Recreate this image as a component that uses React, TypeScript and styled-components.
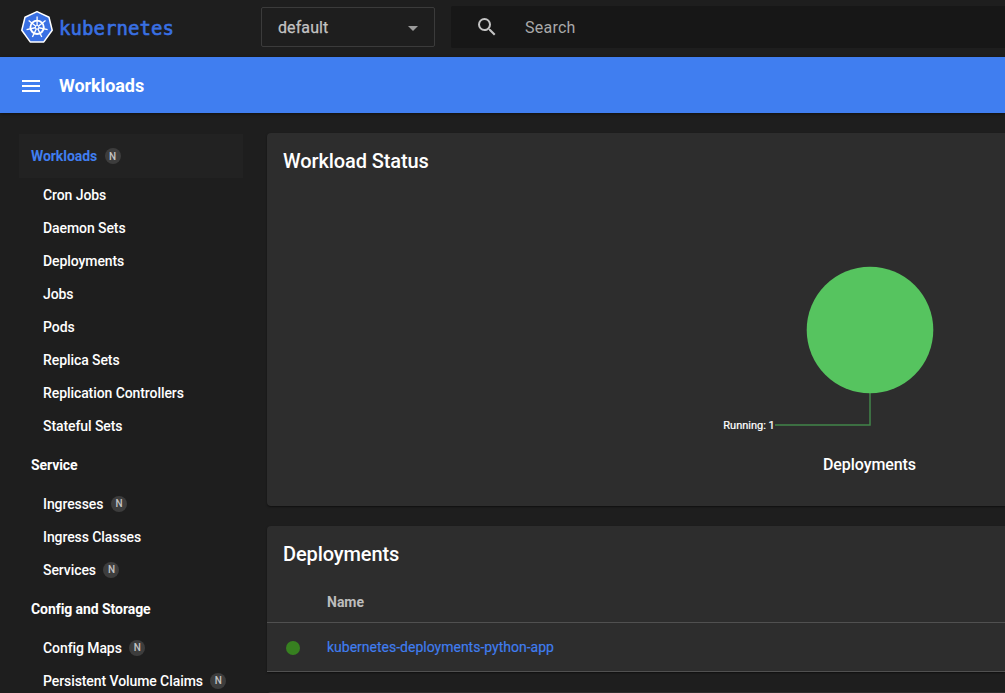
import React from "react";
import styled, { createGlobalStyle } from "styled-components";

const GlobalStyle = createGlobalStyle`
  * { box-sizing: border-box; }
  html, body { margin: 0; background: #1e1e1e; }
  body {
    height: 693px;
    overflow: hidden;
    color: #fff;
    font-family: Roboto, "Liberation Sans", sans-serif;
    font-size: 14px;
    -webkit-font-smoothing: antialiased;
  }
`;

const Page = styled.div`
  display: flex;
  flex-direction: column;
  width: 1005px;
  height: 693px;
  overflow: hidden;
`;

const TopBar = styled.header`
  display: flex;
  flex: none;
  height: 57px;
  padding: 6px 0 0 20px;
  background: #1e1e1e;
`;

const Brand = styled.div`
  display: flex;
  width: 241px;
  padding-top: 4px;
`;

const NamespaceSelect = styled.div`
  display: flex;
  align-items: center;
  justify-content: space-between;
  width: 174px;
  height: 40px;
  margin-top: 1px;
  padding: 0 16px;
  border: 1px solid #3b3b3b;
  border-radius: 2px;
  color: #c3c3c3;
  font-size: 16px;
  letter-spacing: 0.1px;
  -webkit-text-stroke: 0.25px #c3c3c3;
`;

const Caret = styled.span`
  border: 5px solid transparent;
  border-top-color: #9b9b9b;
  border-bottom: 0;
  margin-top: 2px;
`;

const SearchBox = styled.div`
  display: flex;
  flex: 1;
  align-items: center;
  height: 42px;
  margin-left: 16px;
  padding-left: 24px;
  border-radius: 2px 0 0 2px;
  background: #171717;
  color: #a9a9a9;
  font-size: 16px;
  letter-spacing: 0.25px;

  svg { margin-right: 26px; }
`;

const TitleBar = styled.div`
  display: flex;
  flex: none;
  align-items: center;
  height: 56px;
  padding-left: 19px;
  background: #407ef0;
  box-shadow: 0 1px 3px rgba(0, 0, 0, 0.45);
  font-size: 18px;
  font-weight: 700;
  letter-spacing: -0.08px;

  svg { margin-right: 16px; }
`;

const Body = styled.div`
  display: flex;
  flex: 1;
  min-height: 0;
`;

const Sidebar = styled.nav`
  flex: none;
  width: 267px;
  padding: 21px 24px 0 19px;
`;

const GroupLink = styled.div<{ $active?: boolean }>`
  display: flex;
  align-items: center;
  height: ${(p) => (p.$active ? 44 : 45)}px;
  padding-left: 12px;
  background: ${(p) => (p.$active ? "#222222" : "transparent")};
  color: ${(p) => (p.$active ? "#407ef0" : "#fff")};
  font-weight: 700;
  letter-spacing: -0.07px;
`;

const ItemLink = styled.div`
  display: flex;
  align-items: center;
  height: 33px;
  padding-left: 24px;
  font-weight: 500;
  letter-spacing: -0.08px;
`;

const Badge = styled.span`
  display: flex;
  align-items: center;
  justify-content: center;
  width: 16px;
  height: 16px;
  margin-left: 7.5px;
  border-radius: 50%;
  background: #3d3d3d;
  color: #c4c4c4;
  font-size: 10px;
  font-weight: 500;
  line-height: 12px;
  padding-top: 1px;
`;

const Content = styled.main`
  flex: 1;
  padding-top: 20px;
`;

const Card = styled.section<{ $height: number }>`
  height: ${(p) => p.$height}px;
  margin-bottom: 20px;
  border-radius: 4px 0 0 4px;
  background: #2d2d2d;
  box-shadow: 0 1px 2px rgba(0, 0, 0, 0.5);
`;

const TableCard = styled(Card)`
  border-bottom-left-radius: 0;
`;

const CardTitle = styled.h2`
  height: 56px;
  margin: 0;
  padding-left: 16px;
  line-height: 56px;
  font-size: 20px;
  font-weight: 500;
  letter-spacing: -0.1px;
`;

const Chart = styled.svg`
  display: block;
  width: 738px;
  height: 310px;
  font-family: Roboto, "Liberation Sans", sans-serif;
`;

const TableRow = styled.div<{ $height: number }>`
  display: flex;
  align-items: center;
  height: ${(p) => p.$height}px;
  border-bottom: 1px solid #505050;
`;

const StatusCell = styled.div`
  display: flex;
  width: 60px;
  padding: 2px 0 0 19px;
`;

const StatusDot = styled.span`
  width: 14px;
  height: 14px;
  border-radius: 50%;
  background: #378020;
`;

const HeaderCell = styled.div`
  color: #bdbdbd;
  font-weight: 700;
`;

const NameLink = styled.a`
  color: #407ef0;
  font-size: 14px;
  -webkit-text-stroke: 0.15px #407ef0;
`;

const groups = [
  {
    name: "Workloads",
    badge: true,
    active: true,
    items: [
      ["Cron Jobs"],
      ["Daemon Sets"],
      ["Deployments"],
      ["Jobs"],
      ["Pods"],
      ["Replica Sets"],
      ["Replication Controllers"],
      ["Stateful Sets"],
    ],
  },
  { name: "Service", items: [["Ingresses", "N"], ["Ingress Classes"], ["Services", "N"]] },
  { name: "Config and Storage", items: [["Config Maps", "N"], ["Persistent Volume Claims", "N"]] },
];

const spokes = [0, 1, 2, 3, 4, 5, 6].map((i) => (i * 360) / 7);

function Logo() {
  return (
    <svg width="180" height="36" viewBox="0 0 180 36">
      <path
        d="M17 1.6 29 7.2 32.2 20.2 23.8 31.9H10.2L1.8 20.2 5 7.2Z"
        fill="#3970e4"
        stroke="#fff"
        strokeWidth="1.5"
        strokeLinejoin="round"
      />
      <g transform="translate(17.1 17.3)" stroke="#fff" fill="none">
        <circle r="6.7" strokeWidth="1.9" />
        {spokes.map((a) => (
          <path key={a} d="M0-2V-10.8" strokeWidth="1.3" transform={`rotate(${a})`} />
        ))}
        <circle r="1.8" strokeWidth="1.1" />
      </g>
      <text
        x="39"
        y="24.5"
        fill="#3970e4"
        stroke="#3970e4"
        strokeWidth="0.6"
        fontFamily="'DejaVu Sans Mono', monospace"
        fontSize="19"
        letterSpacing="0.06"
      >
        kubernetes
      </text>
    </svg>
  );
}

export default function App() {
  return (
    <Page>
      <GlobalStyle />
      <TopBar>
        <Brand>
          <Logo />
        </Brand>
        <NamespaceSelect>
          default
          <Caret />
        </NamespaceSelect>
        <SearchBox>
          <svg width="24" height="24" viewBox="0 0 24 24" fill="#c4c4c4">
            <path d="M15.5 14h-.79l-.28-.27A6.471 6.471 0 0 0 16 9.5 6.5 6.5 0 1 0 9.5 16c1.61 0 3.09-.59 4.23-1.57l.27.28v.79l5 4.99L20.49 19l-4.99-5zm-6 0C7.01 14 5 11.99 5 9.5S7.01 5 9.5 5 14 7.01 14 9.5 11.99 14 9.5 14z" />
          </svg>
          Search
        </SearchBox>
      </TopBar>
      <TitleBar>
        <svg width="24" height="24" viewBox="0 0 24 24" fill="#fff">
          <path d="M3 19h18v-2H3v2zm0-5h18v-2H3v2zm0-7v2h18V7H3z" />
        </svg>
        Workloads
      </TitleBar>
      <Body>
        <Sidebar>
          {groups.map((g) => (
            <React.Fragment key={g.name}>
              <GroupLink $active={g.active}>
                {g.name}
                {g.badge && <Badge>N</Badge>}
              </GroupLink>
              {g.items.map(([label, badge]) => (
                <ItemLink key={label}>
                  {label}
                  {badge && <Badge>{badge}</Badge>}
                </ItemLink>
              ))}
            </React.Fragment>
          ))}
        </Sidebar>
        <Content>
          <Card $height={373}>
            <CardTitle>Workload Status</CardTitle>
            <Chart viewBox="0 0 738 310">
              <path d="M603 200V236H508" fill="none" stroke="#42854a" strokeWidth="1.5" />
              <circle cx="603" cy="141" r="63.3" fill="#56c45f" />
              <text
                x="507.8"
                y="240"
                textAnchor="end"
                fontSize="11"
                fill="#fff"
                stroke="#fff"
                strokeWidth="0.2"
              >
                Running: 1
              </text>
              <text
                x="602.5"
                y="281"
                textAnchor="middle"
                fontSize="16"
                fontWeight="500"
                letterSpacing="-0.08"
                fill="#fff"
              >
                Deployments
              </text>
            </Chart>
          </Card>
          <TableCard $height={146}>
            <CardTitle>Deployments</CardTitle>
            <TableRow $height={41}>
              <StatusCell />
              <HeaderCell>Name</HeaderCell>
            </TableRow>
            <TableRow $height={49}>
              <StatusCell>
                <StatusDot />
              </StatusCell>
              <NameLink>kubernetes-deployments-python-app</NameLink>
            </TableRow>
          </TableCard>
          <Card $height={373} />
        </Content>
      </Body>
    </Page>
  );
}
